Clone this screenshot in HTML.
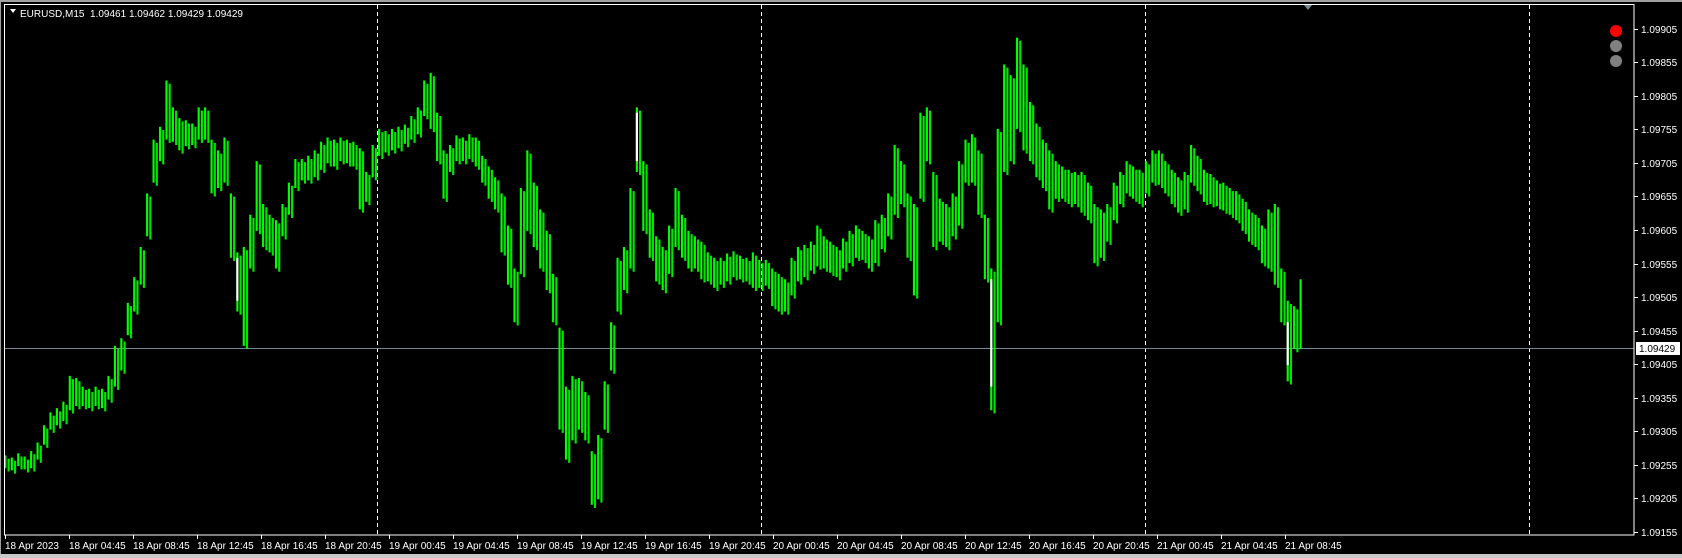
<!DOCTYPE html>
<html><head><meta charset="utf-8"><style>
html,body{margin:0;padding:0;background:#000;width:1682px;height:558px;overflow:hidden}
svg{display:block}
</style></head><body>
<svg width="1682" height="558" xmlns="http://www.w3.org/2000/svg" xmlns:xlink="http://www.w3.org/1999/xlink" font-family="Liberation Sans, sans-serif" font-size="10">
<rect x="0" y="0" width="1682" height="558" fill="#000"/>
<rect x="0" y="0" width="1682" height="2" fill="#a0a0a0"/>
<rect x="0" y="0" width="1" height="558" fill="#a0a0a0"/>
<rect x="0" y="554" width="1682" height="4" fill="#c8c8c8"/>
<g stroke="#fff" stroke-width="1" stroke-dasharray="4,3">
<line x1="377.5" y1="5" x2="377.5" y2="535"/>
<line x1="761.5" y1="5" x2="761.5" y2="535"/>
<line x1="1145.5" y1="5" x2="1145.5" y2="535"/>
<line x1="1529.5" y1="5" x2="1529.5" y2="535"/>
</g>
<line x1="4" y1="348.5" x2="1634" y2="348.5" stroke="#778899" stroke-width="1"/>
<g transform="scale(1.074)">
<path id="cd" fill="none" stroke="#00ff00" stroke-width="2" d="M5 424V436M11 426V438M17 422V434M23 425V437M29 420V436M35 412V428M41 396V414M47 384V400M53 380V396M59 374V392M65 350V382M71 352V378M77 360V378M83 362V380M89 360V378M95 362V380M101 350V372M107 322V360M113 315V345M119 282V312M125 258V290M131 230V265M137 180V220M143 130V170M149 118V150M155 75V130M161 100V132M167 110V140M173 112V136M179 115V135M185 100V130M191 100V130M197 130V180M203 140V175M209 128V170M215 180V240M221 235V290M227 230V322M233 200V250M239 150V215M245 190V230M251 200V235M257 205V250M263 190V220M269 170V200M275 148V175M281 148V168M287 145V168M293 140V165M299 132V158M305 128V152M311 130V155M317 128V150M323 130V152M329 132V155M335 138V195M341 160V188M347 135V165M353 120V145M359 122V142M365 120V140M371 118V138M377 116V134M383 108V130M389 100V125M395 75V108M401 68V120M407 105V150M413 140V185M419 135V160M425 126V150M431 128V150M437 125V148M443 128V155M449 145V170M455 155V185M461 165V195M467 180V235M473 210V265M479 250V300M485 175V255M491 140V215M497 170V230M503 195V250M509 215V270M515 255V300M521 305V400M527 360V428M533 350V410M539 352V400M545 365V410M551 420V470M557 405V465M563 355V400M569 300V345M575 240V290M581 230V270M587 175V250M593 100V160M599 150V215M605 195V240M611 220V262M617 230V270M623 210V255M629 175V230M635 200V240M641 215V250M647 220V250M653 225V260M659 235V262M665 240V268M671 240V265M677 236V262M683 234V258M689 238V260M695 240V262M701 235V268M707 242V268M713 242V266M719 250V285M725 255V290M731 260V290M737 240V275M743 230V262M749 228V258M755 225V252M761 210V248M767 220V250M773 225V254M779 230V258M785 222V250M791 215V245M797 210V240M803 215V242M809 220V250M815 205V245M821 200V232M827 180V220M833 135V200M839 150V190M845 180V240M851 190V275M857 105V185M863 100V150M869 160V230M875 185V225M881 190V230M887 180V220M893 150V210M899 130V170M905 125V170M911 140V200M917 200V260M923 250V382M929 120V300M935 60V160M941 70V150M947 35V120M953 60V140M959 95V150M965 115V165M971 130V175M977 140V195M983 150V185M989 155V185M995 158V190M1001 160V190M1007 160V198M1013 170V205M1019 190V245M1025 195V240M1031 190V225M1037 170V205M1043 160V190M1049 150V180M1055 155V185M1061 158V190M1067 150V180M1073 140V170M1079 140V172M1085 150V180M1091 158V190M1097 165V198M1103 160V195M1109 135V170M1115 145V178M1121 158V188M1127 162V190M1133 168V192M1139 170V196M1145 175V200M1151 178V205M1157 185V215M1163 195V225M1169 200V230M1175 210V245M1181 195V250M1187 190V265M1193 250V300M1199 280V355M1205 285V325"/>
<use xlink:href="#cd" href="#cd" transform="translate(3,3)" opacity="0.9"/>
<path fill="none" stroke="#00ff00" stroke-width="2" d="M1211 260V325"/>
<path fill="none" stroke="#ffffff" stroke-width="2" d="M221 240V280M593 105V150M923 260V360M1199 300V340"/>
</g>
<rect x="4.5" y="4.5" width="1629.5" height="530.5" fill="none" stroke="#fff" stroke-width="1"/>
<polygon points="1304,5 1312,5 1308,10" fill="#778899"/>
<path d="M10 9 L16 9 L13 13 Z" fill="#fff"/>
<text x="20" y="17" fill="#fff" xml:space="preserve">EURUSD,M15  1.09461 1.09462 1.09429 1.09429</text>
<circle cx="1616" cy="31" r="6" fill="#ff0000"/>
<circle cx="1616" cy="46" r="6" fill="#808080"/>
<circle cx="1616" cy="61" r="6" fill="#808080"/>
<g stroke="#fff" stroke-width="1">
<path d="M1634 29.5h4M1634 62.5h4M1634 96.5h4M1634 129.5h4M1634 163.5h4M1634 196.5h4M1634 230.5h4M1634 264.5h4M1634 297.5h4M1634 331.5h4M1634 364.5h4M1634 398.5h4M1634 431.5h4M1634 465.5h4M1634 498.5h4M1634 532.5h4"/>
<path d="M5.5 535v4M69.5 535v4M133.5 535v4M197.5 535v4M261.5 535v4M325.5 535v4M389.5 535v4M453.5 535v4M517.5 535v4M581.5 535v4M645.5 535v4M709.5 535v4M773.5 535v4M837.5 535v4M901.5 535v4M965.5 535v4M1029.5 535v4M1093.5 535v4M1157.5 535v4M1221.5 535v4M1285.5 535v4"/>
</g>
<g fill="#fff">
<text x="1641" y="33">1.09905</text><text x="1641" y="66">1.09855</text><text x="1641" y="100">1.09805</text><text x="1641" y="133">1.09755</text><text x="1641" y="167">1.09705</text><text x="1641" y="200">1.09655</text><text x="1641" y="234">1.09605</text><text x="1641" y="268">1.09555</text><text x="1641" y="301">1.09505</text><text x="1641" y="335">1.09455</text><text x="1641" y="368">1.09405</text><text x="1641" y="402">1.09355</text><text x="1641" y="435">1.09305</text><text x="1641" y="469">1.09255</text><text x="1641" y="502">1.09205</text><text x="1641" y="536">1.09155</text>
<text x="5" y="549">18 Apr 2023</text><text x="69" y="549">18 Apr 04:45</text><text x="133" y="549">18 Apr 08:45</text><text x="197" y="549">18 Apr 12:45</text><text x="261" y="549">18 Apr 16:45</text><text x="325" y="549">18 Apr 20:45</text><text x="389" y="549">19 Apr 00:45</text><text x="453" y="549">19 Apr 04:45</text><text x="517" y="549">19 Apr 08:45</text><text x="581" y="549">19 Apr 12:45</text><text x="645" y="549">19 Apr 16:45</text><text x="709" y="549">19 Apr 20:45</text><text x="773" y="549">20 Apr 00:45</text><text x="837" y="549">20 Apr 04:45</text><text x="901" y="549">20 Apr 08:45</text><text x="965" y="549">20 Apr 12:45</text><text x="1029" y="549">20 Apr 16:45</text><text x="1093" y="549">20 Apr 20:45</text><text x="1157" y="549">21 Apr 00:45</text><text x="1221" y="549">21 Apr 04:45</text><text x="1285" y="549">21 Apr 08:45</text>
</g>
<rect x="1636" y="342" width="44" height="13" fill="#fff"/>
<text x="1639" y="352" fill="#000">1.09429</text>
</svg>
</body></html>
